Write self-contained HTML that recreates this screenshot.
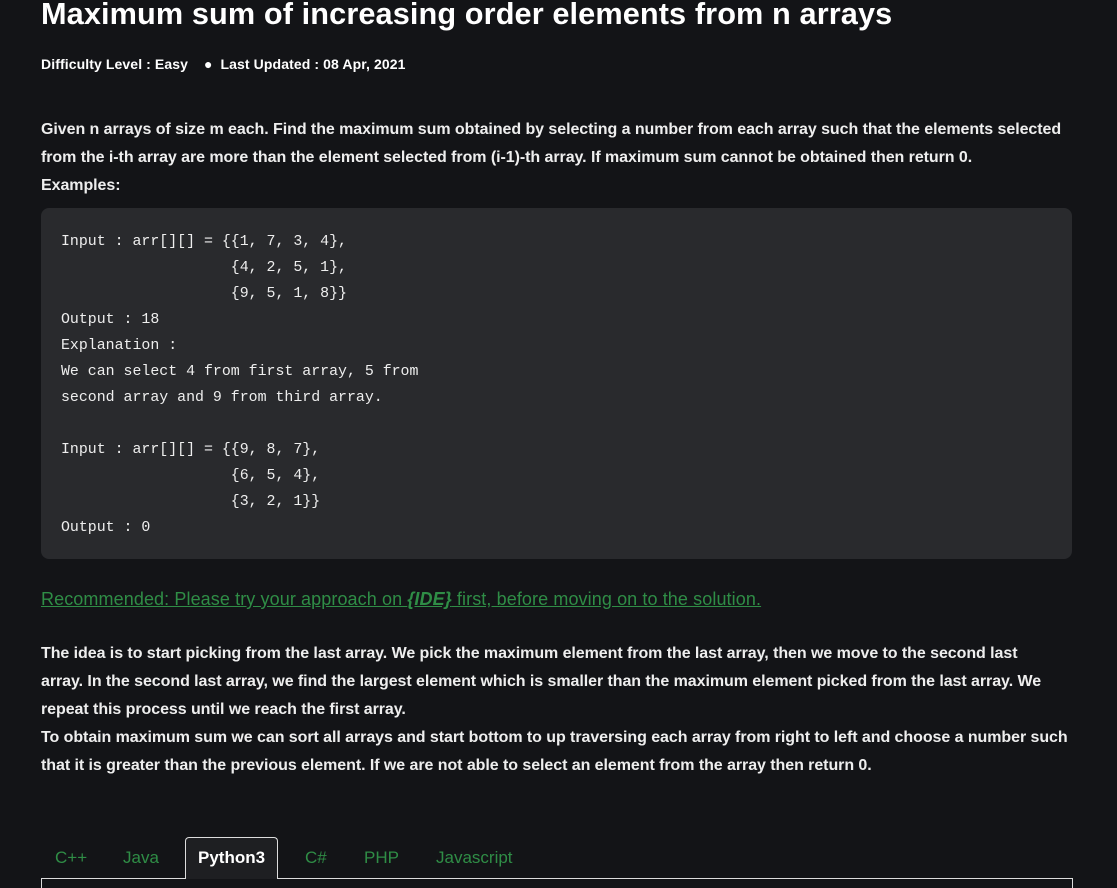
<!DOCTYPE html>
<html><head><style>
body{margin:0;background:#131417;color:#fff;font-family:"Liberation Sans",sans-serif;width:1117px;height:884px;overflow:hidden;position:relative}
.a{position:absolute;left:41px}
h1{position:absolute;left:41px;top:-4px;margin:0;font-size:30.7px;font-weight:bold;white-space:nowrap;letter-spacing:0.1px}
.meta{top:56px;font-size:14px;font-weight:bold;letter-spacing:0.1px}
p{margin:0;font-size:16px;line-height:28px;font-weight:bold;color:#eee;width:1060px;letter-spacing:-0.06px;white-space:nowrap}
pre{position:absolute;left:41px;top:208px;width:1031px;height:351px;margin:0;background:#292a2d;border-radius:8px;box-sizing:border-box;padding:21px 20px;font-family:"Liberation Mono",monospace;font-size:14.9px;line-height:26px;color:#eee}
.rec{top:589px;font-size:18px;color:#2f8d46;text-decoration:underline;letter-spacing:0.1px;white-space:nowrap}
.tab{position:absolute;top:848px;font-size:17px;color:#2f8d46}
.act{position:absolute;left:185px;top:837px;width:93px;height:42px;border:1px solid #ddd;border-bottom:none;border-radius:4px 4px 0 0;background:#1e1f22;box-sizing:border-box}
.line{position:absolute;left:41px;top:878px;width:1032px;height:10px;border:1px solid #ddd;border-bottom:none;box-sizing:border-box}
</style></head><body>
<h1>Maximum sum of increasing order elements from n arrays</h1>
<div class="a meta">Difficulty Level : Easy &nbsp; &nbsp;● &nbsp;Last Updated : 08 Apr, 2021</div>
<p class="a" style="top:116px">Given n arrays of size m each. Find the maximum sum obtained by selecting a number from each array such that the elements selected<br>from the i-th array are more than the element selected from (i-1)-th array. If maximum sum cannot be obtained then return 0.<br>Examples:</p>
<pre>Input : arr[][] = {{1, 7, 3, 4},
                   {4, 2, 5, 1},
                   {9, 5, 1, 8}}
Output : 18
Explanation :
We can select 4 from first array, 5 from
second array and 9 from third array.

Input : arr[][] = {{9, 8, 7},
                   {6, 5, 4},
                   {3, 2, 1}}
Output : 0</pre>
<div class="a rec">Recommended: Please try your approach on <b><i>{IDE}</i></b> first, before moving on to the solution.</div>
<p class="a" style="top:640px">The idea is to start picking from the last array. We pick the maximum element from the last array, then we move to the second last<br>array. In the second last array, we find the largest element which is smaller than the maximum element picked from the last array. We<br>repeat this process until we reach the first array.<br>To obtain maximum sum we can sort all arrays and start bottom to up traversing each array from right to left and choose a number such<br>that it is greater than the previous element. If we are not able to select an element from the array then return 0.</p>
<div class="line"></div>
<div class="act"></div>
<div class="tab" style="left:55px">C++</div>
<div class="tab" style="left:123px">Java</div>
<div class="tab" style="left:198px;color:#fff;font-weight:bold">Python3</div>
<div class="tab" style="left:305px">C#</div>
<div class="tab" style="left:364px">PHP</div>
<div class="tab" style="left:436px">Javascript</div>
</body></html>
